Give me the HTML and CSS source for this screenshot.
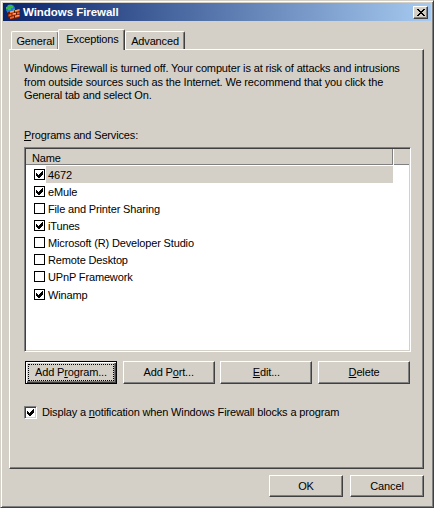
FILE: index.html
```html
<!DOCTYPE html>
<html lang="en">
<head>
    <meta charset="UTF-8">
    <meta name="viewport" content="width=device-width, initial-scale=1.0">
    <title>Windows Firewall</title>
    <link rel="stylesheet" href="styles.css">
</head>
<body>
    <svg class="defs" width="0" height="0">
        <symbol id="tick" viewBox="0 0 9 9">
            <path d="M1 3h1v1h1v1h1V4h1V3h1V2h1V1h1v3H8v1H7v1H6v1H5v1H3V7H2V6H1z" fill="#000"/>
        </symbol>
    </svg>

    <div class="window">
        <div class="titlebar">
            <svg class="app-icon" width="16" height="16" viewBox="0 0 16 16">
                <circle cx="5.5" cy="5" r="4.5" fill="#1f7fd8"/>
                <path d="M3 1h4v1h1v2H6v2H3V5H1V3h2zM8 5h2v2H8z" fill="#38b848"/>
                <path d="M3 8l12-3v9l-10 2-2-3z" fill="#6a1808"/>
                <path d="M5 7.500l4-1v2l-4 1zM10 6.300l4.500-1v2l-4.500 1zM3.500 10.500l3-.7v2l-3 .7zM7.500 9.600l3.500-.8v2l-3.500.8zM12 8.600l2.500-.6v2l-2.500.6zM5 13l4-1v2l-4 1zM10 11.800l4.500-1v2l-4.500 1z" fill="#f0642a"/>
                <path d="M5 7.500l4-1v1l-4 1zM10 6.300l4.500-1v1l-4.500 1zM7.500 9.600l3.500-.8v1l-3.500.8zM10 11.800l4.500-1v1l-4.500 1z" fill="#f8b070"/>
            </svg>
            <span class="title-text">Windows Firewall</span>
            <button class="close-btn" aria-label="Close">
                <svg width="8" height="7" viewBox="0 0 8 7"><path d="M0 0h2v1h1v1h2V1h1V0h2v1H7v1H6v1H5v1h1v1h1v1h1v1H6V6H5V5H3v1H2v1H0V6h1V5h1V4h1V3H2V2H1V1H0z" fill="#000"/></svg>
            </button>
        </div>

        <div class="tabs">
            <div class="tab tab-general">General</div>
            <div class="tab tab-exceptions active">Exceptions</div>
            <div class="tab tab-advanced">Advanced</div>
        </div>

        <div class="panel">
            <p class="intro">Windows Firewall is turned off. Your computer is at risk of attacks and intrusions<br>from outside sources such as the Internet. We recommend that you click the<br>General tab and select On.</p>

            <p class="list-label"><u>P</u>rograms and Services:</p>

            <div class="list">
                <div class="list-header">
                    <div class="col-name">Name</div>
                    <div class="col-rest"></div>
                </div>
                <div class="row selected">
                    <span class="box"><svg width="9" height="9"><use href="#tick"/></svg></span>
                    <span class="row-text">4672</span>
                </div>
                <div class="row">
                    <span class="box"><svg width="9" height="9"><use href="#tick"/></svg></span>
                    <span class="row-text">eMule</span>
                </div>
                <div class="row">
                    <span class="box"></span>
                    <span class="row-text">File and Printer Sharing</span>
                </div>
                <div class="row">
                    <span class="box"><svg width="9" height="9"><use href="#tick"/></svg></span>
                    <span class="row-text">iTunes</span>
                </div>
                <div class="row">
                    <span class="box"></span>
                    <span class="row-text">Microsoft (R) Developer Studio</span>
                </div>
                <div class="row">
                    <span class="box"></span>
                    <span class="row-text">Remote Desktop</span>
                </div>
                <div class="row">
                    <span class="box"></span>
                    <span class="row-text">UPnP Framework</span>
                </div>
                <div class="row">
                    <span class="box"><svg width="9" height="9"><use href="#tick"/></svg></span>
                    <span class="row-text">Winamp</span>
                </div>
            </div>

            <div class="list-actions">
                <button class="btn default"><span class="focus">Add P<u>r</u>ogram...</span></button>
                <button class="btn">Add P<u>o</u>rt...</button>
                <button class="btn"><u>E</u>dit...</button>
                <button class="btn"><u>D</u>elete</button>
            </div>

            <div class="notify">
                <span class="box sunken"><svg width="9" height="9"><use href="#tick"/></svg></span>
                <span>Display a <u>n</u>otification when Windows Firewall blocks a program</span>
            </div>
        </div>

        <div class="footer">
            <button class="btn ok">OK</button>
            <button class="btn ok">Cancel</button>
        </div>
    </div>
</body>
</html>
```

FILE: styles.css
```css
html, body {
    margin: 0;
    height: 100%;
    overflow: hidden;
}
body {
    background-color: #d4d0c8;
    color: #000;
    font-family: "Liberation Sans", Arial, sans-serif;
    font-size: 11px;
    letter-spacing: -0.15px;
}
p {
    margin: 0;
}
u {
    text-underline-offset: 1px;
}
.defs {
    display: block;
    height: 0;
}
.window {
    box-sizing: border-box;
    width: 434px;
    height: 508px;
    padding: 2px;
    display: flex;
    flex-direction: column;
    border: 1px solid;
    border-color: #d4d0c8 #404040 #404040 #d4d0c8;
    box-shadow: inset 1px 1px 0 #fff, inset -1px -1px 0 #808080;
}
.titlebar {
    height: 18px;
    flex: none;
    display: flex;
    align-items: center;
    padding: 0 3px 0 2px;
    background: linear-gradient(to right, #0a246a, #a6caf0);
    color: #fff;
    font-weight: bold;
    font-size: 11.5px;
    letter-spacing: -0.05px;
}
.app-icon {
    flex: none;
    margin-right: 2px;
}
.title-text {
    flex: 1;
}
.close-btn {
    box-sizing: border-box;
    width: 15px;
    height: 13px;
    padding: 0;
    display: flex;
    align-items: center;
    justify-content: center;
    background-color: #d4d0c8;
    border: 1px solid;
    border-color: #fff #404040 #404040 #fff;
    box-shadow: inset -1px -1px 0 #808080;
}
.tabs {
    flex: none;
    display: flex;
    align-items: flex-end;
    height: 28px;
    margin-left: 8px;
    position: relative;
    z-index: 1;
}
.tab {
    box-sizing: border-box;
    height: 18px;
    padding-top: 3px;
    text-align: center;
    border: 1px solid;
    border-color: #fff #404040 transparent #fff;
    border-bottom: none;
    border-radius: 2px 2px 0 0;
    box-shadow: inset -1px 0 0 #808080;
    background-color: #d4d0c8;
}
.tab-general {
    width: 48px;
    padding-left: 1px;
}
.tab-exceptions {
    width: 67px;
    padding-left: 2px;
}
.tab-advanced {
    width: 60px;
}
.tab.active {
    height: 21px;
    margin-bottom: -1px;
    margin-left: -1px;
    margin-right: 0;
    padding-top: 3px;
}
.panel {
    box-sizing: border-box;
    height: 420px;
    flex: none;
    margin: 0 7px 0 6px;
    padding: 12px 12px 0 14px;
    border: 1px solid;
    border-color: #fff #404040 #404040 #fff;
    box-shadow: inset -1px -1px 0 #808080;
}
.intro {
    line-height: 13.5px;
    margin-bottom: 26px;
}
.list-label {
    line-height: 13px;
    margin-bottom: 5px;
}
.list {
    box-sizing: border-box;
    height: 205px;
    width: 387px;
    background-color: #fff;
    border: 1px solid;
    border-color: #808080 #fff #fff #808080;
    box-shadow: inset 1px 1px 0 #404040, inset -1px -1px 0 #d4d0c8;
    padding: 1px 1px 0 1px;
}
.list-header {
    display: flex;
    height: 16px;
    margin-bottom: 1px;
}
.col-name, .col-rest {
    box-sizing: border-box;
    background-color: #d4d0c8;
    border-bottom: 1px solid #808080;
    line-height: 18px;
}
.col-name {
    width: 367px;
    padding-left: 6px;
    border-right: 1px solid #808080;
}
.col-rest {
    flex: 1;
    margin-left: 1px;
}
.row {
    height: 17.15px;
    display: flex;
    align-items: center;
    padding-left: 8px;
}
.row-text {
    flex: none;
    width: 347px;
    box-sizing: border-box;
    height: 17px;
    line-height: 18px;
    padding-left: 2px;
}
.row.selected .row-text {
    background-color: #d4d0c8;
}
.box {
    box-sizing: border-box;
    flex: none;
    width: 11px;
    height: 11px;
    margin-right: 1px;
    border: 1px solid #000;
    background-color: #fff;
    display: flex;
}
.box svg {
    display: block;
}
.box.sunken {
    width: 13px;
    height: 13px;
    margin-right: 5px;
    border-color: #808080 #fff #fff #808080;
    box-shadow: inset 1px 1px 0 #404040, inset -1px -1px 0 #d4d0c8;
    padding: 1px;
}
.list-actions {
    display: flex;
    gap: 5.7px;
    margin-top: 9px;
    margin-left: 1px;
}
.btn {
    box-sizing: border-box;
    padding: 0;
    font: inherit;
    letter-spacing: inherit;
    color: #000;
    background-color: #d4d0c8;
    border: 1px solid;
    border-color: #fff #404040 #404040 #fff;
    box-shadow: inset -1px -1px 0 #808080;
    width: 92px;
    height: 23px;
}
.btn.default {
    border-color: #000;
    box-shadow: inset 1px 1px 0 #fff, inset -1px -1px 0 #404040, inset -2px -2px 0 #808080;
}
.focus {
    display: block;
    margin: 3px;
    line-height: 13px;
    padding: 1px 0;
    outline: 1px dotted #000;
}
.notify {
    display: flex;
    align-items: center;
    margin-top: 22px;
}
.footer {
    flex: none;
    display: flex;
    justify-content: flex-end;
    gap: 7px;
    margin: 6px 7px 0 0;
}
.btn.ok {
    width: 74px;
    height: 22px;
}
```
